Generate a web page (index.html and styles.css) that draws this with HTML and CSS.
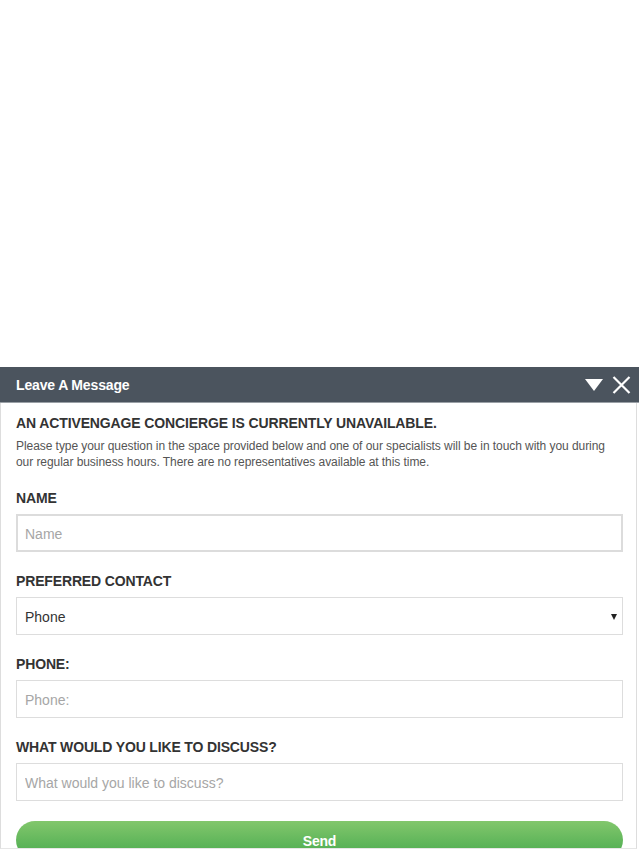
FILE: index.html
```html
<!DOCTYPE html>
<html lang="en">
<head>
<meta charset="utf-8">
<title>Leave A Message</title>
<link rel="stylesheet" href="styles.css">
</head>
<body>
<div class="page-space"></div>
<section class="widget">
  <header class="widget-header">
    <h1 class="widget-title">Leave A Message</h1>
    <div class="widget-controls">
      <svg class="icon" width="18" height="14" viewBox="0 0 18 14"><polygon points="0,1 18,1 9,13" fill="#fff"/></svg>
      <svg class="icon" width="19" height="18" viewBox="0 0 19 18"><path d="M1.5 1 L17.5 17 M17.5 1 L1.5 17" stroke="#fff" stroke-width="2.2" fill="none"/></svg>
    </div>
  </header>
  <div class="widget-body">
    <h2 class="notice-title">AN ACTIVENGAGE CONCIERGE IS CURRENTLY UNAVAILABLE.</h2>
    <p class="notice-text">Please type your question in the space provided below and one of our specialists will be in touch with you during our regular business hours. There are no representatives available at this time.</p>
    <form class="form">
      <div class="field">
        <label class="field-label">NAME</label>
        <input class="field-input field-input--focus" type="text" placeholder="Name">
      </div>
      <div class="field">
        <label class="field-label">PREFERRED CONTACT</label>
        <div class="select-wrap">
          <div class="field-input select-box">Phone</div>
          <span class="select-arrow"></span>
        </div>
      </div>
      <div class="field">
        <label class="field-label">PHONE:</label>
        <input class="field-input" type="text" placeholder="Phone:">
      </div>
      <div class="field">
        <label class="field-label">WHAT WOULD YOU LIKE TO DISCUSS?</label>
        <input class="field-input" type="text" placeholder="What would you like to discuss?">
      </div>
      <button class="send-btn" type="button">Send</button>
    </form>
  </div>
</section>
</body>
</html>
```

FILE: styles.css
```css
html, body {
  margin: 0;
  padding: 0;
  background: #fff;
  font-family: "Liberation Sans", Arial, sans-serif;
  overflow: hidden;
}

.page-space {
  height: 367px;
}

.widget {
  width: 639px;
}

.widget-header {
  height: 35px;
  background: #4b545e;
  border-bottom: 1px solid #9aa0a6;
  display: flex;
  align-items: center;
  justify-content: space-between;
  padding: 0 8px 0 16px;
}

.widget-title {
  margin: 0;
  font-size: 14px;
  font-weight: bold;
  color: #fff;
  letter-spacing: -0.15px;
  padding-top: 1px;
}

.widget-controls {
  display: flex;
  align-items: center;
  gap: 9px;
  padding-top: 1px;
}

.icon {
  display: block;
}

.widget-body {
  width: 607px;
  height: 435px;
  overflow: hidden;
  padding: 10px 13px 0 15px;
  border-left: 1px solid #ddd;
  border-right: 1px solid #ddd;
  border-bottom: 1px solid #e6e6e6;
}

.notice-title {
  margin: 0;
  padding-top: 1px;
  font-size: 14px;
  line-height: 18px;
  font-weight: bold;
  color: #333;
  letter-spacing: -0.12px;
}

.notice-text {
  margin: 6px 0 0;
  font-size: 12px;
  line-height: 16px;
  color: #555;
  letter-spacing: -0.06px;
}

.form {
  margin: 19px 0 0;
}

.field {
  display: flex;
  flex-direction: column;
  gap: 7px;
  margin-bottom: 20px;
}

.field-label {
  font-size: 14px;
  line-height: 18px;
  font-weight: bold;
  color: #333;
  letter-spacing: -0.15px;
}

.field-input {
  box-sizing: border-box;
  width: 607px;
  height: 38px;
  margin: 0;
  border: 1px solid #ddd;
  border-radius: 0;
  padding: 2px 8px 0;
  font-family: "Liberation Sans", Arial, sans-serif;
  font-size: 14px;
  color: #333;
  background: #fff;
  outline: none;
}

.field-input--focus {
  border: 2px solid #dcdcdc;
  padding: 2px 7px 0;
}

.field-input::placeholder {
  color: #a6a6a6;
}

.select-wrap {
  position: relative;
}

.select-box {
  display: flex;
  align-items: center;
}

.select-arrow {
  position: absolute;
  right: 6px;
  top: 17px;
  width: 0;
  height: 0;
  border-left: 3.5px solid transparent;
  border-right: 3.5px solid transparent;
  border-top: 6px solid #222;
}

.send-btn {
  display: block;
  width: 607px;
  height: 38px;
  margin: 1px 0 0;
  border: none;
  border-radius: 19px;
  background: linear-gradient(to bottom, #82c76c, #47a94e);
  color: #fff;
  font-family: "Liberation Sans", Arial, sans-serif;
  font-size: 14px;
  font-weight: bold;
  letter-spacing: -0.2px;
  padding: 1px 0 0;
}
```
